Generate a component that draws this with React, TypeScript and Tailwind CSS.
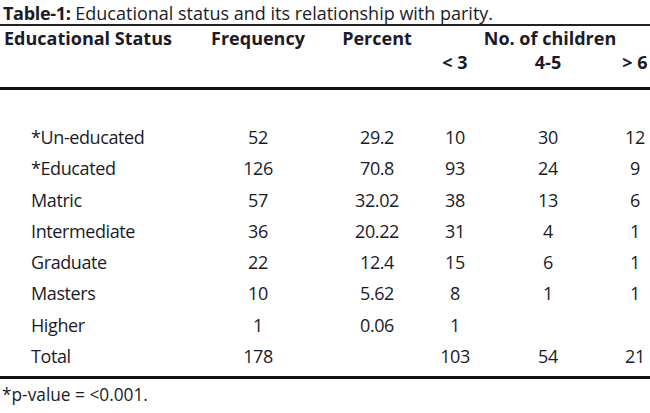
import React from 'react';

const rows = [
  { label: '*Un-educated', freq: '52', pct: '29.2', a: '10', b: '30', c: '12' },
  { label: '*Educated', freq: '126', pct: '70.8', a: '93', b: '24', c: '9' },
  { label: 'Matric', freq: '57', pct: '32.02', a: '38', b: '13', c: '6' },
  { label: 'Intermediate', freq: '36', pct: '20.22', a: '31', b: '4', c: '1' },
  { label: 'Graduate', freq: '22', pct: '12.4', a: '15', b: '6', c: '1' },
  { label: 'Masters', freq: '10', pct: '5.62', a: '8', b: '1', c: '1' },
  { label: 'Higher', freq: '1', pct: '0.06', a: '1', b: '', c: '' },
  { label: 'Total', freq: '178', pct: '', a: '103', b: '54', c: '21' },
];

const cols = 'grid grid-cols-[196px_124px_114px_42px_144px_30px]';

export default function App() {
  return (
    <div className="w-[650px] h-[413px] bg-white text-[#1b1b27] font-['Open_Sans','Liberation_Sans',sans-serif] font-medium text-[18px] overflow-hidden">
      {/* Caption */}
      <div className="h-[26px] pt-[2px] pl-[3px] leading-[22px] border-b-2 border-[#222] whitespace-nowrap">
        <span className="font-bold tracking-[-0.3px]">Table-1:</span> Educational status and its relationship with parity.
      </div>

      {/* Column headings */}
      <div className={`${cols} font-bold leading-[24px]`}>
        <div className="pl-[4px] whitespace-nowrap">Educational Status</div>
        <div className="text-center">Frequency</div>
        <div className="text-center">Percent</div>
        <div className="col-span-3 text-center pl-4 whitespace-nowrap">No. of children</div>
      </div>
      <div className={`${cols} font-bold leading-[24px]`}>
        <div />
        <div />
        <div />
        <div className="text-center whitespace-nowrap">&lt; 3</div>
        <div className="text-center whitespace-nowrap">4-5</div>
        <div className="text-center whitespace-nowrap">&gt; 6</div>
      </div>
      <div className="mt-[13px] h-[3px] bg-[#111]" />

      {/* Body */}
      <div className="mt-[32px] tracking-[-0.4px]">
        {rows.map((r) => (
          <div key={r.label} className={`${cols} h-[31.3px] leading-[31.3px]`}>
            <div className="pl-[31px] whitespace-nowrap">{r.label}</div>
            <div className="text-center">{r.freq}</div>
            <div className="text-center">{r.pct}</div>
            <div className="text-center">{r.a}</div>
            <div className="text-center">{r.b}</div>
            <div className="text-center">{r.c}</div>
          </div>
        ))}
      </div>
      <div className="mt-[4px] h-[3px] bg-[#111]" />

      {/* Footnote */}
      <div className="mt-[5px] pl-[2px] text-[17.3px] leading-[22px]">*p-value = &lt;0.001.</div>
    </div>
  );
}
